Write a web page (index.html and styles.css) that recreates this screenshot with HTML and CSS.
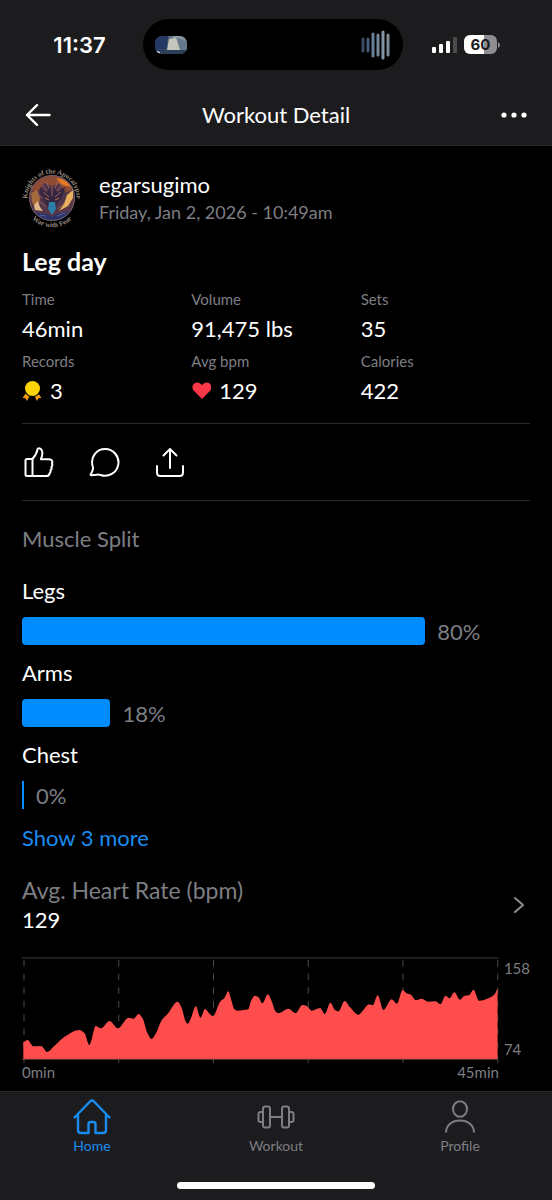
FILE: index.html
```html
<!DOCTYPE html>
<html lang="en">
<head>
  <meta charset="UTF-8">
  <meta name="viewport" content="width=device-width, initial-scale=1.0">
  <title>Workout Detail</title>
  <link rel="stylesheet" href="styles.css">
</head>
<body>
<header class="top">
  <div class="status">
    <div class="time">11:37</div>
    <div class="island">
      <svg width="32" height="18" viewBox="0 0 32 18">
        <defs>
          <linearGradient id="sky" x1="0" x2="1">
            <stop offset="0" stop-color="#263c68"/>
            <stop offset="0.35" stop-color="#34475f"/>
            <stop offset="0.65" stop-color="#9ba8ad"/>
            <stop offset="1" stop-color="#718398"/>
          </linearGradient>
          <clipPath id="pill"><rect width="32" height="18" rx="7"/></clipPath>
        </defs>
        <g clip-path="url(#pill)">
          <rect width="32" height="18" fill="url(#sky)"/>
          <path d="M0 0h13l-2 13H0z" fill="#233963"/>
          <path d="M14 3l8-1 4 12-14 0z" fill="#c4c6bd"/>
          <path d="M21 1l4 13h7V6z" fill="#65788c"/>
          <path d="M0 14h32v4H0z" fill="#2b3f59"/>
          <path d="M2 15l3 1v1H2z" fill="#d9e2e8"/>
        </g>
      </svg>
      <svg width="30" height="32" viewBox="0 0 30 32" stroke-width="3" stroke-linecap="round">
        <path d="M2 10v12" stroke="#3c4a66"/>
        <path d="M7 10v12" stroke="#475a78"/>
        <path d="M12 5v22" stroke="#6a7f99"/>
        <path d="M17 6v20" stroke="#73879c"/>
        <path d="M22 3v26" stroke="#8496a6"/>
        <path d="M27 6v20" stroke="#7e8b95"/>
      </svg>
    </div>
    <div class="signal">
      <svg width="26" height="18" viewBox="0 0 26 18" fill="#fff">
        <rect x="0" y="11" width="4" height="6" rx="1"/>
        <rect x="7" y="8" width="4" height="9" rx="1"/>
        <rect x="14" y="5" width="4" height="12" rx="1"/>
        <rect x="21" y="1" width="4" height="16" rx="1" fill="#4b4b4d"/>
      </svg>
      <div class="battery">60</div>
      <svg class="tip" width="2" height="6" viewBox="0 0 2 6"><path d="M0 0q2 1 2 3t-2 3z" fill="#8e8e90"/></svg>
    </div>
  </div>
  <div class="navbar">
    <button class="icon-btn" aria-label="Back">
      <svg width="26" height="22" viewBox="0 0 26 22" fill="none" stroke="#fff" stroke-width="2.400" stroke-linecap="round" stroke-linejoin="round"><path d="M12 1.200L2 11l10 9.800M2 11h22.500"/></svg>
    </button>
    <h1>Workout Detail</h1>
    <button class="icon-btn" aria-label="More">
      <svg width="26" height="22" viewBox="0 0 26 22" fill="#fff"><circle cx="3" cy="11" r="2.600"/><circle cx="13" cy="11" r="2.600"/><circle cx="23" cy="11" r="2.600"/></svg>
    </button>
  </div>
</header>

<main>
  <section class="user">
    <svg class="avatar" width="60" height="60" viewBox="0 0 60 60">
      <defs>
        <radialGradient id="fire" cx="0.5" cy="0.45" r="0.6">
          <stop offset="0" stop-color="#46304a"/>
          <stop offset="0.6" stop-color="#593746"/>
          <stop offset="1" stop-color="#343064"/>
        </radialGradient>
        <path id="arcTop" d="M6 35A24.500 24.500 0 1 1 54 35"/>
        <path id="arcBottom" d="M2 36A28.500 28.500 0 0 0 58 36"/>
        <clipPath id="disc"><circle cx="30" cy="30" r="23"/></clipPath>
      </defs>
      <g clip-path="url(#disc)">
        <rect width="60" height="60" fill="url(#fire)"/>
        <path d="M9 22q8-14 21-14t22 14l-8 2-6-8-8 2-8-3-7 9z" fill="#8f4c34"/>
        <path d="M34 10q11 1 15 9l-9-2z" fill="#e37a24"/>
        <path d="M9 25l6-3 3 8-3 12-5-8z" fill="#a66b3d"/>
        <path d="M51 22l-6 5-3 9-5 7 9-5 5-8z" fill="#e8b05c"/>
        <path d="M12 37l4-4 2 6 3 4-8-1z" fill="#e0b58a"/>
        <path d="M18 20l6 5 6-6 6 6 7-6-3 11-5 5-2 8h-6l-3-8-5-6z" fill="#352540"/>
        <path d="M21 24l6 5M39 24l-6 5M20 17l5 6M41 16l-6 7M30 18v10M17 33l7 6M43 34l-7 7M24 13l3 7M36 13l-3 7M15 26l6 4" stroke="#9a6258" fill="none"/>
        <path d="M23 30l4 2M37 30l-4 2" stroke="#c87a55"/>
        <path d="M27 34h6l1 7-4 6-4-6z" fill="#2d7fa8"/>
        <path d="M12 44q8 2 14 2l4 3 5-3 13-3-7 9H19z" fill="#2c3268"/>
        <path d="M18 47l6 1M35 48l8-3" stroke="#4f659c"/>
      </g>
      <circle cx="30" cy="30" r="22.500" fill="none" stroke="#75606c"/>
      <text class="ring"><textPath href="#arcTop" startOffset="50%" text-anchor="middle">Knights of the Apocalypse</textPath></text>
      <text class="ring"><textPath href="#arcBottom" startOffset="50%" text-anchor="middle">War with Fear</textPath></text>
    </svg>
    <div>
      <div class="name">egarsugimo</div>
      <div class="date">Friday, Jan 2, 2026 - 10:49am</div>
    </div>
  </section>

  <h2>Leg day</h2>

  <dl class="stats">
    <div><dt>Time</dt><dd>46min</dd></div>
    <div><dt>Volume</dt><dd>91,475 lbs</dd></div>
    <div><dt>Sets</dt><dd>35</dd></div>
    <div>
      <dt>Records</dt>
      <dd>
        <svg width="20" height="20" viewBox="0 0 20 20"><path d="M4 12l-3.500 5 3 .3L5 20l3-6zM16 12l3.500 5-3 .3L15 20l-3-6z" fill="#f59a13"/><circle cx="10.500" cy="8" r="8.200" fill="#000"/><circle cx="10.500" cy="7.500" r="7.500" fill="#fcd307"/></svg>
        3
      </dd>
    </div>
    <div>
      <dt>Avg bpm</dt>
      <dd>
        <svg width="20" height="20" viewBox="0 0 20 20"><path d="M11 18L2.600 9.500C.2 6.500 1.600 2 6 1.600c2.200 0 3.800 1 5 2.800 1.200-1.800 2.800-2.800 5-2.800 4.400.4 5.400 4.900 3.400 7.900z" fill="#fb3748"/></svg>
        129
      </dd>
    </div>
    <div><dt>Calories</dt><dd>422</dd></div>
  </dl>

  <div class="actions">
    <button class="icon-btn" aria-label="Like">
      <svg width="32" height="32" viewBox="0 0 32 32"><path d="M10.500 13H5A1.500 1.500 0 0 0 3.500 14.500v14A1.500 1.500 0 0 0 5 30H24.500q2.600 0 3-2.500 1.600-1.400 1-3.200 1.700-1.500.9-3.300 1.500-1.700.6-3.300 1.300-3.700-2.500-4.500h-8.600q2.300-5 1-8.700-1.200-2.700-3.500-2.300-.7 0-.9 1.200Q14.800 8 10.500 13zM10.500 13.500V30"/></svg>
    </button>
    <button class="icon-btn" aria-label="Comment">
      <svg width="32" height="32" viewBox="0 0 32 32"><path d="M4.500 19.500C2.300 10.500 9 3 17 3a13.400 13.400 0 1 1-4.500 26q-2-.7-4-.3l-5.300.6q-1-.1-.4-1l1.800-4q.8-1.800-.1-4.800z"/></svg>
    </button>
    <button class="icon-btn" aria-label="Share">
      <svg width="32" height="32" viewBox="0 0 32 32"><path d="M16 22V3M9.500 9.500L16 3l6.500 6.500M3 20v6.500Q3 30 6.500 30h19q3.500 0 3.500-3.500V20"/></svg>
    </button>
  </div>

  <section class="split">
    <h3>Muscle Split</h3>
    <div class="muscle">Legs</div>
    <div class="row"><div class="bar" style="width: 79.400%"></div><span>80%</span></div>
    <div class="muscle">Arms</div>
    <div class="row"><div class="bar" style="width: 17.400%"></div><span>18%</span></div>
    <div class="muscle">Chest</div>
    <div class="row"><div class="bar empty"></div><span>0%</span></div>
    <a href="#" class="more">Show 3 more</a>
  </section>

  <section>
    <a href="#" class="heart">
      <div>
        <h3>Avg. Heart Rate (bpm)</h3>
        <div class="avg">129</div>
      </div>
      <svg width="22" height="22" viewBox="0 0 22 22" fill="none" stroke="#8e8e93" stroke-width="2" stroke-linecap="round" stroke-linejoin="round"><path d="M7 4l8 7-8 7"/></svg>
    </a>
    <div class="chart">
      <div class="plot">
        <svg id="hrChart" height="106" viewBox="0 0 1432 318" preserveAspectRatio="none"></svg>
        <div class="x-axis"><span>0min</span><span>45min</span></div>
      </div>
      <div class="y-axis"><span>158</span><span>74</span></div>
    </div>
  </section>
</main>

<nav class="tabs">
  <a href="#" class="tab active">
    <svg width="38" height="38" viewBox="0 0 38 38" stroke-width="2.400"><path d="M1.500 19.500L17 3.500q2-2 4 0l15.500 16M5 16.500V32q0 3 3 3h7.500V26q0-2 2-2h3q2 0 2 2v9H30q3 0 3-3V16.500"/></svg>
    Home
  </a>
  <a href="#" class="tab">
    <svg width="38" height="38" viewBox="0 0 38 38" stroke-width="2"><rect x="6" y="8.500" width="7" height="21" rx="2"/><rect x="25" y="8.500" width="7" height="21" rx="2"/><path d="M13 19h12M6 14H3.500Q1.500 14 1.500 16v6q0 2 2 2H6M32 14h2.500q2 0 2 2v6q0 2-2 2H32"/></svg>
    Workout
  </a>
  <a href="#" class="tab">
    <svg width="38" height="38" viewBox="0 0 38 38" stroke-width="2"><ellipse cx="19" cy="11" rx="7" ry="7.800"/><path d="M5 34.500C5 27 11 22.500 19 22.500S33 27 33 34.500" stroke-linecap="butt"/></svg>
    Profile
  </a>
  <div class="home-bar"></div>
</nav>
<script src="chart.js"></script>
</body>
</html>
```

FILE: styles.css
```css
* { margin: 0; padding: 0; box-sizing: border-box; }
body {
  background: #000;
  color: #fff;
  font-family: Lato, "Open Sans", sans-serif;
  font-size: 22px;
  line-height: 30px;
  min-height: 100vh;
  display: flex;
  flex-direction: column;
}
svg { display: block; flex-shrink: 0; }
a { text-decoration: none; color: inherit; }
h1, h3 { font-size: 22px; font-weight: 400; }
h3 { color: #7d7e83; }
.icon-btn { background: none; border: none; cursor: pointer; }

/* status bar + title */
.top { background: #1c1c1e; border-bottom: 1px solid #2a2a2c; }
.status {
  display: grid;
  grid-template-columns: 1fr 260px 1fr;
  align-items: center;
  padding: 19px 6px 10px 0;
}
.time {
  font-family: Inter, sans-serif;
  font-size: 22px;
  font-weight: 600;
  text-align: center;
  padding-left: 16px;
}
.island {
  height: 51px;
  border-radius: 26px;
  background: #000;
  display: flex;
  justify-content: space-between;
  align-items: center;
  padding: 0 12px;
}
.signal { display: flex; align-items: center; padding-left: 29px; }
.battery {
  width: 33px;
  height: 19px;
  margin-left: 6px;
  border-radius: 6px;
  background: linear-gradient(to right, #fff 60%, #8e8e90 60%);
  color: #1c1c1e;
  font: 700 15px/19px Inter, sans-serif;
  text-align: center;
}
.tip { margin-left: 1px; }
.navbar {
  display: flex;
  justify-content: space-between;
  align-items: center;
  padding: 20px 25px 15px;
}

main { padding: 22px 22px 8px; }
.user { display: flex; align-items: center; gap: 17px; }
.avatar { overflow: visible; }
.name { line-height: 28px; }
.date { font-size: 18px; line-height: 26px; color: #7d7e83; }
.ring { font: 700 7px "Liberation Serif", serif; fill: #94877f; }
h2 { font-size: 25px; font-weight: 700; line-height: 30px; margin-top: 18px; }

.stats { display: grid; grid-template-columns: repeat(3, 1fr); margin-top: 11px; }
.stats dt { font-size: 15px; line-height: 24px; color: #7d7e83; }
.stats dd { display: flex; align-items: center; gap: 8px; height: 38px; padding-bottom: 2px; }

.actions {
  display: flex;
  gap: 34px;
  margin-top: 12px;
  padding: 22px 0;
  border-top: 1px solid #2a2a2c;
  border-bottom: 1px solid #2a2a2c;
}
.actions svg { fill: none; stroke: #fff; stroke-width: 2; stroke-linecap: round; stroke-linejoin: round; }

.split { margin-top: 23px; }
.split h3 { margin-bottom: 22px; }
.muscle { margin-bottom: 11px; }
.row { display: flex; align-items: center; gap: 12px; height: 28px; margin-bottom: 13px; color: #7d7e83; }
.row span { padding-top: 2px; }
.bar { height: 28px; border-radius: 4px; background: #008cff; }
.bar.empty { width: 2px; border-radius: 0; }
.more { display: block; margin-top: 14px; color: #1a8cf0; }

.heart { display: flex; justify-content: space-between; align-items: center; margin-top: 22px; }
.heart h3 { font-size: 23px; }
.chart { display: flex; gap: 5px; margin-top: 22px; font-size: 15px; line-height: 18px; color: #7d7e83; }
.plot { flex: 1; }
.plot svg { width: 100%; }
.x-axis { display: flex; justify-content: space-between; }
.y-axis { display: flex; flex-direction: column; justify-content: space-between; padding: 2px 0 23px; }

.tabs {
  position: sticky;
  bottom: 0;
  margin-top: auto;
  background: #1c1c1e;
  border-top: 1px solid #2a2a2c;
  display: grid;
  grid-template-columns: repeat(3, 1fr);
  padding: 6px 0 11px;
}
.tab {
  display: flex;
  flex-direction: column;
  align-items: center;
  font-size: 14px;
  line-height: 20px;
  color: #7d7e83;
}
.tab svg { fill: none; stroke: currentColor; stroke-linecap: round; stroke-linejoin: round; }
.tab.active { color: #1a8cf0; }
.home-bar {
  grid-column: 1 / -1;
  justify-self: center;
  width: 198px;
  height: 7px;
  border-radius: 4px;
  background: #fff;
  margin-top: 26px;
}
```

FILE: chart.js
```js
// heart rate samples: position along the workout, height above the baseline
const samples = [
  [0, 51], [13, 57], [30, 38], [54, 39], [71, 21], [93, 39], [126, 68], [168, 87], [184, 77], [198, 42],
  [204, 55], [217, 99], [233, 92], [259, 114], [284, 92], [316, 124], [331, 121], [346, 135], [358, 122],
  [373, 77], [385, 60], [398, 77], [416, 117], [433, 135], [463, 172], [474, 157], [488, 112], [494, 106],
  [503, 122], [518, 158], [532, 124], [546, 150], [558, 137], [570, 128], [578, 142], [591, 172], [603, 182],
  [616, 203], [623, 182], [634, 149], [643, 145], [661, 147], [675, 149], [685, 177], [695, 190], [706, 185],
  [718, 167], [734, 194], [748, 167], [756, 145], [766, 138], [796, 151], [818, 138], [838, 162], [851, 159],
  [866, 145], [891, 153], [905, 135], [922, 169], [936, 147], [946, 143], [965, 174], [981, 155], [1006, 133],
  [1021, 147], [1038, 164], [1049, 161], [1064, 191], [1081, 147], [1106, 179], [1122, 166], [1139, 207],
  [1151, 197], [1164, 193], [1178, 177], [1196, 181], [1216, 172], [1238, 173], [1252, 164], [1268, 190],
  [1280, 182], [1294, 200], [1311, 178], [1324, 189], [1338, 191], [1352, 208], [1368, 175], [1406, 187],
  [1416, 195], [1424, 210]
];
const left = 4;
const base = 306;

function slope(i) {
  const a = samples[i - 1], b = samples[i], c = samples[i + 1];
  if (!a || !c) return 0;
  const s1 = (b[1] - a[1]) / (b[0] - a[0]);
  const s2 = (c[1] - b[1]) / (c[0] - b[0]);
  if (s1 * s2 <= 0) return 0;
  return 2 * s1 * s2 / (s1 + s2);
}

let d = `M${left} ${base}V${base - samples[0][1]}`;
for (let i = 1; i < samples.length; i++) {
  const [x0, y0] = samples[i - 1];
  const [x1, y1] = samples[i];
  const h = (x1 - x0) / 3;
  d += `C${left + x0 + h} ${base - y0 - h * slope(i - 1)} ${left + x1 - h} ${base - y1 + h * slope(i)} ${left + x1} ${base - y1}`;
}
d += `V${base}Z`;

let grid = '';
for (let i = 0; i <= 5; i++) {
  const x = left + 2 + i * 284.5;
  grid += `<path d="M${x} 9V${base}" stroke="#4a4a4c" stroke-width="3" stroke-dasharray="20 21"/>`;
  grid += `<path d="M${x} ${base}V318" stroke="#4a4a4c" stroke-width="3"/>`;
}
document.getElementById('hrChart').innerHTML =
  `<path d="M0 3H1432" stroke="#3a3a3c" stroke-width="3"/>` + grid +
  `<path d="${d}" fill="#ff4d4d"/><path d="M0 ${base + 1}H1428" stroke="#6b3a3c" stroke-width="3"/>`;
```
